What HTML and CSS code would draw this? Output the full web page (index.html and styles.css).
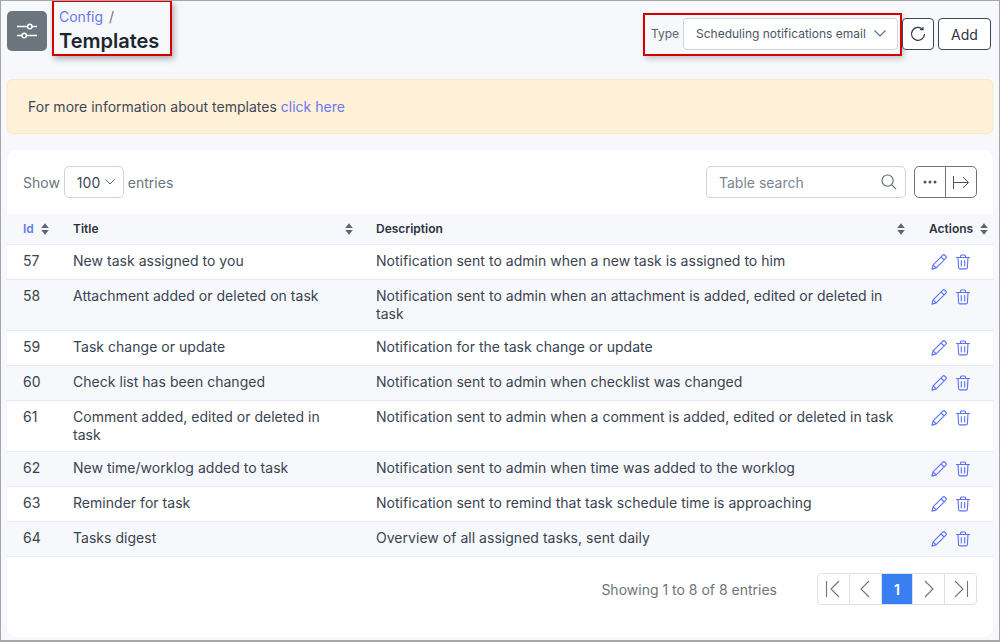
FILE: index.html
```html
<!DOCTYPE html>
<html lang="en">
<head>
  <meta charset="UTF-8" />
  <meta name="viewport" content="width=device-width, initial-scale=1.0"/>
  <title>Templates</title>
  <link rel="stylesheet" href="styles.css">
</head>
<body>
  <svg class="defs" width="0" height="0">
    <symbol id="pencil" viewBox="0 0 16 16"><path d="M11.600 1.300a1.700 1.700 0 0 1 2.400 0l.7.700a1.700 1.700 0 0 1 0 2.400L5.200 13.900l-4.300 1.200 1.200-4.300zM10 2.900l3.100 3.100M2.100 10.800l3.100 3.100" fill="none" stroke="currentColor" stroke-width="1.100" stroke-linejoin="round"/></symbol>
    <symbol id="trash" viewBox="0 0 16 16"><path d="M1.500 3.500h13M5.500 3.500V2a1 1 0 0 1 1-1h3a1 1 0 0 1 1 1v1.500M3 3.500l.6 10a1.500 1.500 0 0 0 1.500 1.400h5.800a1.500 1.500 0 0 0 1.500-1.400l.6-10M6.300 6.500v5.500M9.700 6.500v5.500" fill="none" stroke="currentColor" stroke-width="1.100" stroke-linecap="round" stroke-linejoin="round"/></symbol>
    <symbol id="sort" viewBox="0 0 8 12"><path d="M4 .2 7.800 5H.2zM4 11.800.2 7h7.600z" fill="currentColor"/></symbol>
  </svg>

  <header class="top">
    <div class="top-left">
      <div class="page-icon">
        <svg width="20" height="20" viewBox="0 0 20 20" fill="none" stroke="#fff" stroke-width="1.400">
          <path d="M0 5.500h10.500M15 5.500h5M0 14.500h5M9.500 14.500h10.500"/>
          <circle cx="12.800" cy="5.500" r="2.200"/><circle cx="7.200" cy="14.500" r="2.200"/>
        </svg>
      </div>
      <div class="title-box">
        <div class="crumb"><a href="#">Config</a><span>/</span></div>
        <h1>Templates</h1>
      </div>
    </div>
    <div class="top-right">
      <div class="type-box">
        <label>Type</label>
        <div class="select">
          <span>Scheduling notifications email</span>
          <svg width="12" height="7" viewBox="0 0 12 7" fill="none" stroke="#5c6673" stroke-width="1.100"><path d="M.5.500 6 6 11.500.5"/></svg>
        </div>
      </div>
      <button class="btn btn-icon">
        <svg width="16" height="16" viewBox="0 0 18 18" fill="none" stroke="#2f3742" stroke-width="1.400"><path d="M14.200 3.800A7.300 7.300 0 1 0 16.300 9"/><path d="M14.600 1v3.200h-3.200" stroke-linejoin="miter"/></svg>
      </button>
      <button class="btn">Add</button>
    </div>
  </header>

  <div class="alert">For more information about templates <a href="#">click here</a></div>

  <main class="card">
    <div class="toolbar">
      <div class="show">
        Show
        <div class="length"><span>100</span>
          <svg width="10" height="6" viewBox="0 0 10 6" fill="none" stroke="#5c6673"><path d="M.5.500 5 5 9.500.5"/></svg>
        </div>
        entries
      </div>
      <div class="tools">
        <div class="search">
          <span>Table search</span>
          <svg width="16" height="16" viewBox="0 0 17 17" fill="none" stroke="#5c6673" stroke-width="1.200"><circle cx="7" cy="7" r="6"/><path d="M11.500 11.500 16 16"/></svg>
        </div>
        <div class="btn-group">
          <button><svg width="14" height="4" viewBox="0 0 14 4" fill="#4a5360"><circle cx="2" cy="2" r="1.500"/><circle cx="7" cy="2" r="1.500"/><circle cx="12" cy="2" r="1.500"/></svg></button>
          <button><svg width="16" height="13" viewBox="0 0 16 13" fill="none" stroke="#4a5360"><path d="M.5 0v13M.5 6.500h15M10 1l5.500 5.500L10 12"/></svg></button>
        </div>
      </div>
    </div>

    <table class="list">
      <colgroup><col class="c-id"><col class="c-title"><col class="c-desc"><col class="c-act"></colgroup>
      <thead>
        <tr>
          <th class="active"><div class="th">Id <svg class="sort"><use href="#sort"/></svg></div></th>
          <th class="th-title"><div class="th between">Title <svg class="sort"><use href="#sort"/></svg></div></th>
          <th><div class="th between">Description <svg class="sort"><use href="#sort"/></svg></div></th>
          <th><div class="th between">Actions <svg class="sort"><use href="#sort"/></svg></div></th>
        </tr>
      </thead>
      <tbody>
        <tr>
          <td>57</td><td>New task assigned to you</td>
          <td>Notification sent to admin when a new task is assigned to him</td>
          <td class="acts"><svg><use href="#pencil"/></svg><svg><use href="#trash"/></svg></td>
        </tr>
        <tr>
          <td>58</td><td>Attachment added or deleted on task</td>
          <td>Notification sent to admin when an attachment is added, edited or deleted in task</td>
          <td class="acts"><svg><use href="#pencil"/></svg><svg><use href="#trash"/></svg></td>
        </tr>
        <tr>
          <td>59</td><td>Task change or update</td>
          <td>Notification for the task change or update</td>
          <td class="acts"><svg><use href="#pencil"/></svg><svg><use href="#trash"/></svg></td>
        </tr>
        <tr>
          <td>60</td><td>Check list has been changed</td>
          <td>Notification sent to admin when checklist was changed</td>
          <td class="acts"><svg><use href="#pencil"/></svg><svg><use href="#trash"/></svg></td>
        </tr>
        <tr>
          <td>61</td><td>Comment added, edited or deleted in task</td>
          <td>Notification sent to admin when a comment is added, edited or deleted in task</td>
          <td class="acts"><svg><use href="#pencil"/></svg><svg><use href="#trash"/></svg></td>
        </tr>
        <tr>
          <td>62</td><td>New time/worklog added to task</td>
          <td>Notification sent to admin when time was added to the worklog</td>
          <td class="acts"><svg><use href="#pencil"/></svg><svg><use href="#trash"/></svg></td>
        </tr>
        <tr>
          <td>63</td><td>Reminder for task</td>
          <td>Notification sent to remind that task schedule time is approaching</td>
          <td class="acts"><svg><use href="#pencil"/></svg><svg><use href="#trash"/></svg></td>
        </tr>
        <tr>
          <td>64</td><td>Tasks digest</td>
          <td>Overview of all assigned tasks, sent daily</td>
          <td class="acts"><svg><use href="#pencil"/></svg><svg><use href="#trash"/></svg></td>
        </tr>
      </tbody>
    </table>

    <div class="foot">
      <span class="info">Showing 1 to 8 of 8 entries</span>
      <div class="pager">
        <a><svg width="18" height="18" viewBox="0 0 18 18"><path d="M2.500 1v16M15 1 7 9l8 8"/></svg></a>
        <a><svg width="18" height="18" viewBox="0 0 18 18"><path d="M13 1 5 9l8 8"/></svg></a>
        <a class="current">1</a>
        <a><svg width="18" height="18" viewBox="0 0 18 18"><path d="m5 1 8 8-8 8"/></svg></a>
        <a><svg width="18" height="18" viewBox="0 0 18 18"><path d="m3 1 8 8-8 8M15.500 1v16"/></svg></a>
      </div>
    </div>
  </main>
</body>
</html>
```

FILE: styles.css
```css
* { box-sizing: border-box; }
html, body { height: 100%; }
body {
  margin: 0; padding: 0 6px; overflow: hidden;
  font-family: Inter, sans-serif; font-size: 14px; color: #2b3340;
  background: #f6f8fc; border: 1px solid #a6a6a6; border-bottom-width: 2px;
}
a { color: #6a76f5; text-decoration: none; }
.defs { position: absolute; }

.top { display: flex; justify-content: space-between; height: 78px; }
.top-left { display: flex; align-items: flex-start; }
.page-icon {
  width: 40px; height: 40px; margin-top: 10px; border-radius: 5px; background: #6c757d;
  display: flex; align-items: center; justify-content: center;
}
.title-box {
  width: 120px; height: 56px; margin: -1px 0 0 5px; padding: 6px 0 0 5px; background: #f6f8fc;
  border: 2px solid #d40000; box-shadow: 2px 3px 6px rgba(0, 0, 0, .3);
}
.crumb { display: flex; gap: 6px; line-height: 17px; color: #6c757d; }
h1 { margin: 3px 0 0; font-size: 20px; line-height: 26px; font-weight: 600; color: #1d2530; }

.top-right { display: flex; align-items: flex-start; margin: 17px 2px 0 0; }
.type-box {
  display: flex; align-items: center; width: 259px; height: 43px; margin-top: -5px; padding: 0 0 2px 6px;
  border: 2px solid #d40000; background: #f6f8fc; box-shadow: 2px 3px 6px rgba(0, 0, 0, .2);
}
.type-box label { width: 32px; font-size: 12px; color: #5a6470; }
.select {
  display: flex; align-items: center; justify-content: space-between; width: 215px; height: 32px; padding: 0 11px 0 12px;
  background: #fff; border: 1px solid #ced4da; border-radius: 4px; font-size: 12px; color: #4a5564;
}
.btn {
  height: 32px; width: 53px; margin-left: 4px; padding: 0; background: #fff; border: 1px solid #3e4650; border-radius: 4px;
  font: 14px Inter, sans-serif; color: #2b3340;
}
.btn-icon { width: 32px; margin-left: 0; display: flex; align-items: center; justify-content: center; }

.alert {
  height: 55px; padding: 0 20px; line-height: 54px; border: 1px solid #ffe8c0; border-radius: 5px;
  background: #fff0d8; color: #3f4855; letter-spacing: .01px;
}

.card { height: 487px; margin-top: 16px; background: #fff; border-radius: 10px; }
.toolbar { display: flex; justify-content: space-between; align-items: center; height: 64px; padding: 0 16px; }
.show { display: flex; align-items: center; gap: 4px; color: #6c757d; }
.length {
  display: flex; align-items: center; justify-content: space-between; width: 60px; height: 32px; padding: 0 8px 0 12px;
  background: #fff; border: 1px solid #ced4da; border-radius: 5px; color: #3f4855;
}
.tools { display: flex; gap: 8px; }
.search {
  display: flex; align-items: center; justify-content: space-between; width: 200px; height: 32px; padding: 0 8px 0 12px;
  border: 1px solid #ced4da; border-radius: 5px; color: #7b8590;
}
.btn-group { display: flex; width: 63px; height: 32px; border: 1px solid #6c757d; border-radius: 5px; }
.btn-group button { flex: 1; padding: 0; border: 0; background: none; display: flex; align-items: center; justify-content: center; }
.btn-group button + button { border-left: 1px solid #6c757d; }

.list { width: 100%; table-layout: fixed; border-collapse: separate; border-spacing: 0; }
.c-id { width: 50px; } .c-title { width: 303px; } .c-desc { width: 553px; } .c-act { width: 80px; }
th {
  height: 31px; padding: 0 8px 1px 16px; background: #f6f8fc; border-bottom: 1px solid #e6e9ef;
  font-size: 12px; font-weight: 600; text-align: left; color: #2b3340;
}
.th { display: flex; align-items: center; gap: 7px; }
.between { justify-content: space-between; }
.active { color: #5b7bf5; }
.sort { flex: none; width: 8px; height: 12px; color: #5c6673; }
.th-title { padding-right: 7px; }
td {
  padding: 7px 16px; line-height: 18px; vertical-align: top; border-bottom: 1px solid #e6e9ef;
  color: #3a4350; letter-spacing: .03px;
}
tbody tr { height: 35px; }
tbody tr:nth-child(even) td { background: #f6f8fc; }
.acts { padding: 9px 0 0 18px; white-space: nowrap; color: #5b6ff5; }
.acts svg { width: 16px; height: 16px; margin-right: 8px; display: inline-block; vertical-align: top; }

.foot { display: flex; justify-content: flex-end; align-items: center; gap: 40px; height: 64px; padding-right: 16px; }
.info { color: #6c757d; }
.pager { display: flex; width: 160px; height: 32px; border: 1px solid #dee2e6; border-radius: 4px; background: #dee2e6; gap: 1px; overflow: hidden; }
.pager a {
  flex: 1; display: flex; align-items: center; justify-content: center; background: #fff; color: #fff; font-weight: 600;
}
.pager svg { fill: none; stroke: #6b7684; stroke-width: 1.100; }
.pager .current { background: #3a7ff2; }
```
